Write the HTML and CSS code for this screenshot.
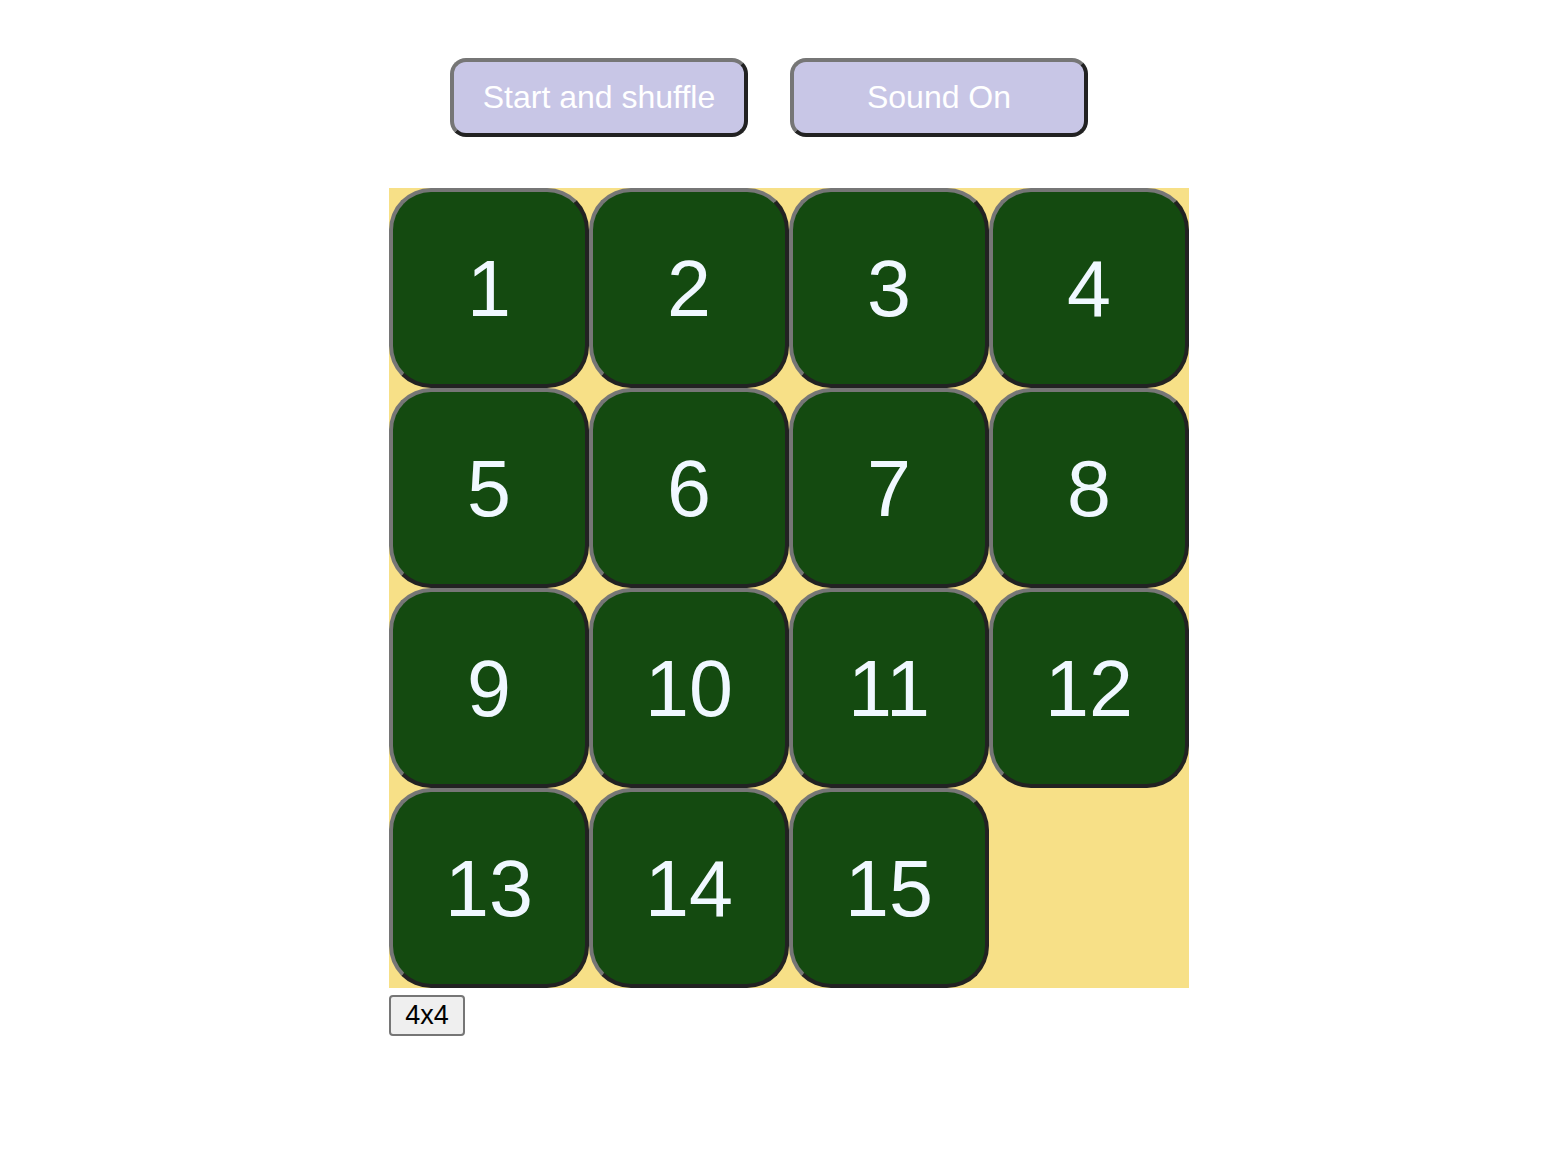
FILE: index.html
```html
<!DOCTYPE html>
<html>
<head>
<meta charset="utf-8">
<title>15 Puzzle</title>
<link rel="stylesheet" href="styles.css">
</head>
<body>
<div class="wrap">
  <div class="controls">
    <button class="ctl">Start and shuffle</button>
    <button class="ctl">Sound On</button>
  </div>
  <div class="board">
    <div class="tile">1</div>
    <div class="tile">2</div>
    <div class="tile">3</div>
    <div class="tile">4</div>
    <div class="tile">5</div>
    <div class="tile">6</div>
    <div class="tile">7</div>
    <div class="tile">8</div>
    <div class="tile">9</div>
    <div class="tile">10</div>
    <div class="tile">11</div>
    <div class="tile">12</div>
    <div class="tile">13</div>
    <div class="tile">14</div>
    <div class="tile">15</div>
    <div class="empty"></div>
  </div>
  <button class="size">4x4</button>
</div>
</body>
</html>
```

FILE: styles.css
```css
body {
  margin: 8px;
  font-family: "Liberation Sans", Arial, sans-serif;
  background: #ffffff;
}

.wrap {
  margin-left: 381px;
  width: 800px;
}

.controls {
  display: flex;
  gap: 42px;
  padding-left: 61px;
  margin-top: 50px;
}

.ctl {
  box-sizing: border-box;
  width: 298px;
  height: 79px;
  background: #c8c6e6;
  color: #ffffff;
  font-family: "Liberation Sans", Arial, sans-serif;
  font-size: 32px;
  border: 4px solid;
  border-color: #767676 #222222 #222222 #767676;
  border-radius: 16px;
  padding: 0;
  cursor: pointer;
}

.board {
  margin-top: 51px;
  width: 800px;
  height: 800px;
  background: #f7e087;
  display: grid;
  grid-template-columns: repeat(4, 200px);
  grid-template-rows: repeat(4, 200px);
}

.tile {
  box-sizing: border-box;
  width: 200px;
  height: 200px;
  background: #144a10;
  color: #f0f8ff;
  border: 4px solid;
  border-color: #767676 #222222 #222222 #767676;
  border-radius: 42px;
  display: flex;
  align-items: center;
  justify-content: center;
  font-size: 79px;
  line-height: 1;
}

.size {
  box-sizing: border-box;
  margin-top: 7px;
  width: 76px;
  height: 41px;
  font-family: "Liberation Sans", Arial, sans-serif;
  font-size: 27px;
  color: #000000;
  background: #efefef;
  border: 2px solid #767676;
  border-radius: 4px;
  padding: 0;
}
```
